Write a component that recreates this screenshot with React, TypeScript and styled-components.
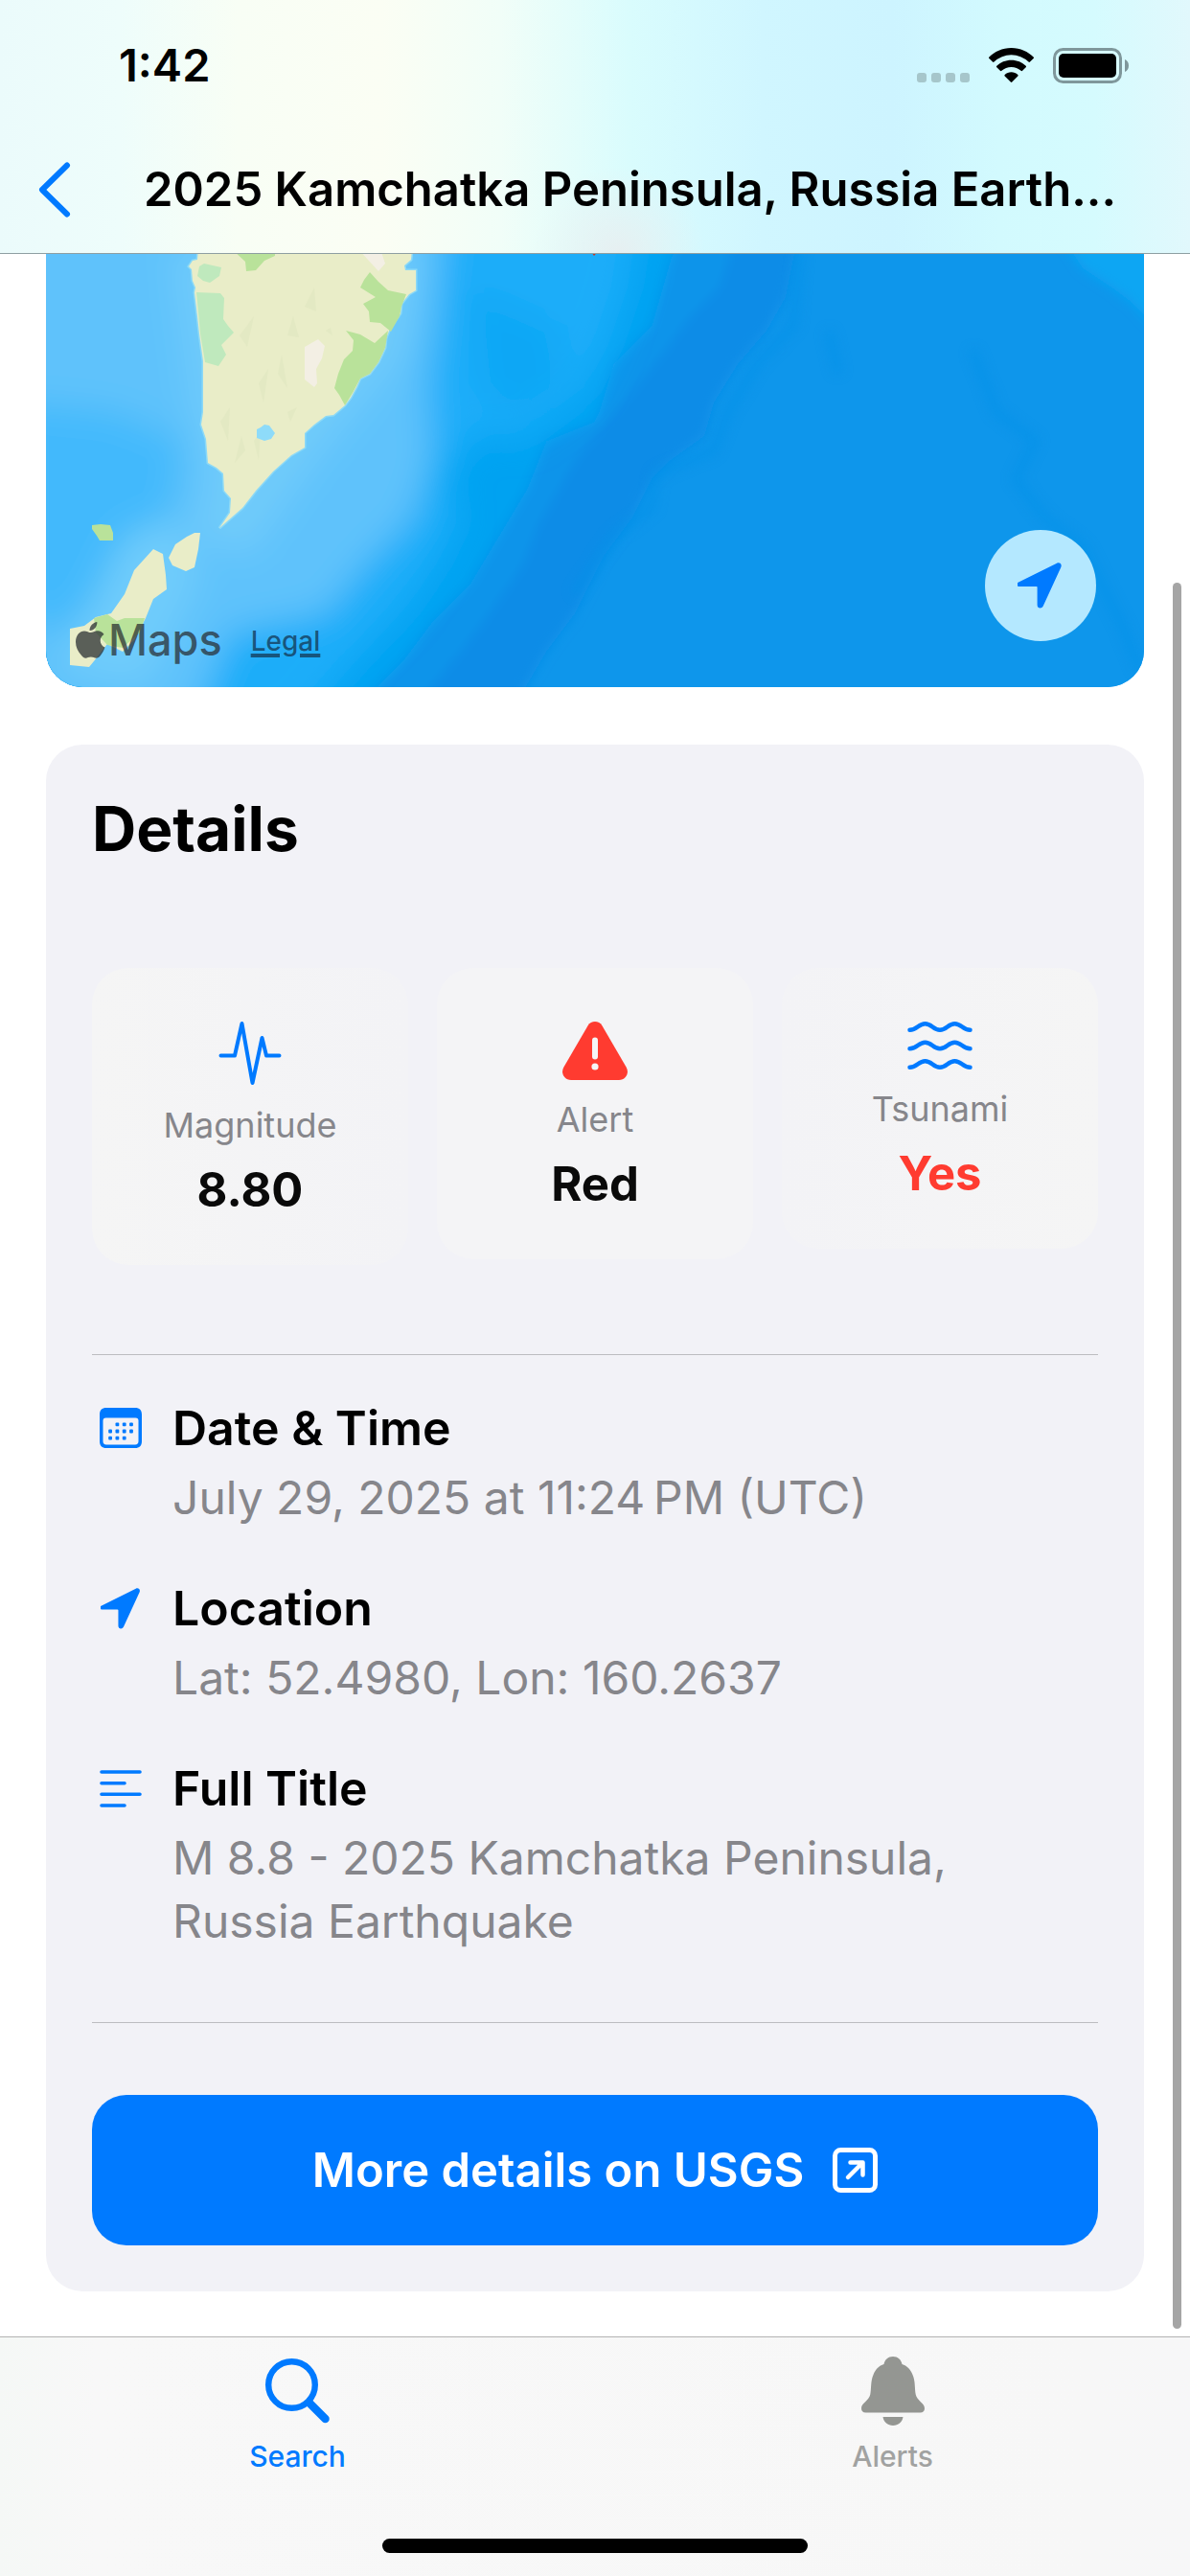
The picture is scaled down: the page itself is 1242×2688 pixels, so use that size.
import React from "react";
import styled, { createGlobalStyle } from "styled-components";

const blue = "#007aff";
const red = "#ff3b30";
const secondary = "#86868b";

const GlobalStyle = createGlobalStyle`
  * { box-sizing: border-box; }
  body {
    margin: 0;
    background: #fff;
    color: #000;
    font-family: Inter, "Liberation Sans", sans-serif;
    font-size: 49px;
    line-height: 60px;
  }
  h1, h2, h3, p, dl, dt, dd { margin: 0; font: inherit; }
  button { border: 0; padding: 0; background: none; font: inherit; color: inherit; }
  svg { display: block; flex: none; }
`;

const Screen = styled.div`
  display: flex;
  flex-direction: column;
  min-height: 100vh;
`;

const Header = styled.header`
  border-bottom: 1px solid #8e9fa2;
  background:
    radial-gradient(ellipse 90px 90px at 52% 100%, rgba(232, 238, 240, 0.9), rgba(232, 238, 240, 0) 100%),
    linear-gradient(90deg, #ebfbfb 0%, #eefdfb 10%, #f8fef5 20%, #fbfef4 32%, #f1fef8 42%, #d9fcfd 53%, #d0f6ff 64%, #cdf4ff 75%, #d2fafe 84%, #d5fbfe 92%, #e1f8fc 100%);
`;

const StatusBar = styled.div`
  display: flex;
  justify-content: space-between;
  align-items: center;
  height: 132px;
  padding: 4px 64px 0 124px;
  font-size: 47px;
  font-weight: 600;
`;

const StatusIcons = styled.div`
  display: flex;
  align-items: center;
`;

const NavBar = styled.nav`
  display: flex;
  align-items: center;
  height: 132px;
  padding: 0 76px 0 36px;
  gap: 72px;
`;

const BackButton = styled.button`
  display: flex;
  align-items: center;
  justify-content: center;
  width: 42px;
  height: 88px;
`;

const NavTitle = styled.h1`
  flex: 1;
  min-width: 0;
  font-weight: 600;
  white-space: nowrap;
  overflow: hidden;
  text-overflow: ellipsis;
`;

const Main = styled.main`
  position: relative;
  flex: 1;
  display: flex;
  flex-direction: column;
  gap: 60px;
  padding: 0 48px 47px;
`;

const ScrollThumb = styled.div`
  position: absolute;
  top: 343px;
  right: 9px;
  bottom: 8px;
  width: 9px;
  border-radius: 5px;
  background: #a5a5a5;
`;

const MapCard = styled.section`
  position: relative;
  height: 452px;
  border-radius: 0 0 38px 38px;
  overflow: hidden;
  background: #0e96eb;
`;

const MapDrawing = styled.svg`
  width: 100%;
  height: 100%;
`;

const Attribution = styled.div`
  position: absolute;
  left: 31px;
  bottom: 18px;
  display: flex;
  align-items: center;
  gap: 30px;
`;

const MapsMark = styled.span`
  display: flex;
  align-items: center;
  gap: 3px;
  font-size: 45px;
  font-weight: 500;
  color: rgba(40, 44, 48, 0.74);
`;

const LegalLink = styled.a`
  padding-top: 2px;
  font-size: 28px;
  font-weight: 500;
  color: rgba(20, 60, 90, 0.78);
  text-decoration: underline;
  text-decoration-thickness: 4px;
  text-underline-offset: 3px;
  text-decoration-skip-ink: auto;
`;

const LocateButton = styled.button`
  position: absolute;
  right: 50px;
  bottom: 48px;
  display: flex;
  align-items: center;
  justify-content: center;
  width: 116px;
  height: 116px;
  border-radius: 50%;
  background: #b4e8ff;
`;

const DetailsCard = styled.section`
  display: flex;
  flex-direction: column;
  padding: 48px;
  border-radius: 38px;
  background: #f2f2f7;
`;

const CardTitle = styled.h2`
  font-size: 64px;
  line-height: 80px;
  font-weight: 700;
`;

const Stats = styled.dl`
  display: grid;
  grid-template-columns: repeat(3, 1fr);
  align-items: start;
  gap: 30px;
  padding: 105px 0 93px;
`;

const Stat = styled.div`
  display: flex;
  flex-direction: column;
  align-items: center;
  gap: 16px;
  padding: 48px 24px;
  border-radius: 38px;
  background: #f4f4f6;

  &:first-child { background: linear-gradient(90deg, #f5f5f5, #f3f3f6); }
  &:last-child { background: linear-gradient(90deg, #f3f3f6, #f5f5f5); }
`;

const StatLabel = styled.dt`
  font-size: 36px;
  line-height: 44px;
  color: ${secondary};
`;

const StatValue = styled.dd<{ $alert?: boolean }>`
  font-weight: 700;
  color: ${(p) => (p.$alert ? red : "#0a0a0a")};
`;

const Divider = styled.hr`
  width: 100%;
  height: 1px;
  margin: 0;
  border: 0;
  background: #bcbcc0;
`;

const InfoList = styled.dl`
  display: flex;
  flex-direction: column;
  gap: 52px;
  padding: 46px 0 72px;
`;

const InfoRow = styled.div`
  display: grid;
  grid-template-columns: 60px 1fr;
  column-gap: 24px;
  row-gap: 10px;
`;

const InfoIcon = styled.span`
  display: flex;
  align-items: center;
  justify-content: center;
`;

const InfoTitle = styled.dt`
  font-size: 50px;
  font-weight: 600;
`;

const InfoValue = styled.dd`
  grid-column: 2;
  font-size: 48px;
  line-height: 66px;
  color: ${secondary};
`;

const LinkButton = styled.a`
  display: flex;
  align-items: center;
  justify-content: center;
  gap: 30px;
  height: 157px;
  margin-top: 75px;
  border-radius: 36px;
  background: ${blue};
  color: #fff;
  font-weight: 600;
  text-decoration: none;
`;

const TabBar = styled.footer`
  border-top: 1px solid #b2b2b2;
  background: linear-gradient(90deg, #f5f8f6, #f8f8f8 8%, #f7f7f7 92%, #f7f7f8);
`;

const Tabs = styled.nav`
  display: grid;
  grid-template-columns: 1fr 1fr;
`;

const Tab = styled.button<{ $active?: boolean }>`
  display: flex;
  flex-direction: column;
  align-items: center;
  gap: 12px;
  padding-top: 18px;
  font-size: 30px;
  line-height: 36px;
  font-weight: 500;
  color: ${(p) => (p.$active ? blue : "#a1a2a1")};
`;

const HomeIndicator = styled.div`
  width: 444px;
  height: 15px;
  margin: 68px auto 24px;
  border-radius: 8px;
  background: #000;
`;

const CellularDots = () => (
  <svg width="55" height="37" viewBox="0 0 55 37" fill="#a6c6cb">
    {[0, 15, 30, 45].map((x) => (
      <rect key={x} x={x} y="26" width="10" height="10" rx="3" />
    ))}
  </svg>
);

const Wifi = () => (
  <svg width="87" height="37" viewBox="0 0 87 37">
    <g transform="translate(20 0)" fill="#000">
      <path d="M23.5 0C33 0 41 4 46.6 9.5a1 1 0 0 1 0 1.5L43 14.6a1 1 0 0 1-1.5 0A26 26 0 0 0 5.5 14.6a1 1 0 0 1-1.5 0L.4 11a1 1 0 0 1 0-1.5C6 4 14 0 23.5 0Z" />
      <path d="M23.5 12.7c6 0 11.3 2.3 15.2 6a1 1 0 0 1 0 1.5l-3.6 3.6a1 1 0 0 1-1.5 0 15 15 0 0 0-20.2 0 1 1 0 0 1-1.5 0l-3.6-3.6a1 1 0 0 1 0-1.5c3.9-3.7 9.2-6 15.2-6Z" />
      <path d="M23.5 25.3c2.6 0 5 1 6.800 2.6a1 1 0 0 1 0 1.5l-6 6.2a1 1 0 0 1-1.5 0l-6.100-6.2a1 1 0 0 1 0-1.5c1.8-1.6 4.2-2.6 6.800-2.6Z" />
    </g>
  </svg>
);

const Battery = () => (
  <svg width="79" height="37" viewBox="0 0 79 37">
    <rect x="1.5" y="1.5" width="69" height="34" rx="9" fill="none" stroke="#7f979b" strokeWidth="3" />
    <rect x="6" y="6" width="60" height="25" rx="5" fill="#000" />
    <path d="M75 12c2.5 1 4 3.5 4 6.5S77.5 24 75 25Z" fill="#7f979b" />
  </svg>
);

const Chevron = () => (
  <svg width="34" height="58" viewBox="0 0 34 58" fill="none" stroke={blue} strokeWidth="6" strokeLinecap="round" strokeLinejoin="round">
    <path d="M30 3.5 4 29l26 25.5" />
  </svg>
);

const Arrow = ({ size }: { size: number }) => (
  <svg width={size} height={size} viewBox="2 0 48 48" fill={blue}>
    <path d="M2.6 20.8 43 .7c3.1-1.5 5.7 1.2 4.3 4.2L28.8 45.3c-1.6 3.4-6.2 2.7-6.2-1.1V26c0-.7-.3-1-1-1H3.5C-.3 25-1 22.6 2.6 20.8Z" />
  </svg>
);

const Pulse = () => (
  <svg width="66" height="78" viewBox="0 0 66 78" fill="none" stroke={blue} strokeWidth="4" strokeLinecap="round" strokeLinejoin="round">
    <path d="M2.5 43.5H17L24.5 10l11 62 10-47 4.5 18.5h13.500" />
  </svg>
);

const Warning = () => (
  <svg width="68" height="72" viewBox="0 0 68 72">
    <path d="M26.600 12.200c3.300-5.600 11.500-5.600 14.800 0l25.200 43.200c3.600 6.300-.4 13.600-7.600 13.600H9c-7.200 0-11.200-7.300-7.600-13.600Z" fill={red} />
    <path d="M34 27.500v17" stroke="#f5f5f6" strokeWidth="6" strokeLinecap="round" />
    <circle cx="34" cy="55" r="3.600" fill="#f5f5f6" />
  </svg>
);

const Waves = () => (
  <svg width="68" height="61" viewBox="0 0 68 61" fill="none" stroke={blue} strokeWidth="4.5" strokeLinecap="round">
    {[0, 19.5, 39].map((y) => (
      <path key={y} transform={`translate(0 ${y})`} d="M2.500 16.700c8 0 9-6.500 16-6.500s8.500 6.500 15.500 6.500 8.500-6.500 15.500-6.500 8 6.500 16 6.500" />
    ))}
  </svg>
);

const Calendar = () => (
  <svg width="44" height="42" viewBox="0 0 44 42" fill={blue}>
    <path fillRule="evenodd" d="M7 0h30c4.6 0 7 2.4 7 7v28c0 4.6-2.4 7-7 7H7c-4.6 0-7-2.4-7-7V7c0-4.6 2.4-7 7-7Zm-.5 10.5c-2 0-3 1-3 3v21.5c0 2.200 1.200 3.500 3.500 3.500h30c2.300 0 3.500-1.300 3.500-3.500V13.500c0-2-1-3-3-3Z" />
    {[[1, 0], [2, 0], [3, 0], [0, 1], [1, 1], [2, 1], [3, 1], [0, 2], [1, 2], [2, 2]].map(([c, r]) => (
      <rect key={`${c}${r}`} x={9.2 + c * 7.3} y={15.4 + r * 7.2} width="3.8" height="3.8" rx="1" />
    ))}
  </svg>
);

const TextLines = () => (
  <svg width="44" height="39" viewBox="0 0 44 39" stroke={blue} strokeWidth="3.600" strokeLinecap="round">
    <path d="M2 2h40M2 13.700h24M2 25.300h40M2 37h24" />
  </svg>
);

const OpenSquare = () => (
  <svg width="47" height="47" viewBox="0 0 47 47" fill="none" stroke="#fff" strokeWidth="5" strokeLinecap="round" strokeLinejoin="round">
    <rect x="2.500" y="2.500" width="42" height="42" rx="6" />
    <path d="M16 31 31 16M18.500 15.500H31.500V28.500" strokeWidth="4.500" />
  </svg>
);

const Magnifier = () => (
  <svg width="68" height="76" viewBox="0 0 68 76" fill="none" stroke={blue}>
    <circle cx="27.500" cy="31.500" r="24.300" strokeWidth="6.400" />
    <path d="M46 50.500 62.500 67" strokeWidth="8.500" strokeLinecap="round" />
  </svg>
);

const Bell = () => (
  <svg width="66" height="76" viewBox="0 0 66 76" fill="#949692">
    <path d="M4.500 60.500C1.600 60.500 0 58.800 0 56c0-5.500 8-7.800 9.300-14.500C10.500 35 9.500 28 12.500 21c2-5.500 6-9.500 11-11C24.500 5 28 2 33 2s8.500 3 9.500 8c5 1.500 9 5.500 11 11 3 7 2 14 3.200 20.500C58 48.200 66 50.500 66 56c0 2.800-1.600 4.500-4.500 4.500Z" />
    <path d="M22.500 65h21C42.700 70.500 38.500 74 33 74s-9.700-3.500-10.500-9Z" />
  </svg>
);

const AppleLogo = () => (
  <svg width="31" height="38" viewBox="0 0 31 38" fill="currentColor">
    <path d="M22.300 0c.3 2.300-.6 4.600-2 6.300-1.400 1.700-3.600 3-5.700 2.800-.3-2.200.8-4.500 2.100-6C18.100 1.400 20.400.2 22.300 0ZM29.500 13c-2.300 1.400-3.800 3.500-3.800 6.500 0 3.400 2 5.900 4.800 7-1 3.200-2.600 6-4.600 8.500-1.400 1.700-2.700 2.700-4.500 2.700-2 0-2.900-1.200-5.500-1.200s-3.600 1.200-5.500 1.200c-1.900 0-3.300-1.300-4.700-3.200C2.300 30.700 0 26 0 21c0-7.300 4.300-11.600 9-11.600 2.600 0 4.700 1.700 6.800 1.700 1.900 0 4-1.800 7.100-1.800 2.700 0 5 1.300 6.600 3.700Z" />
  </svg>
);

const Terrain = () => (
  <MapDrawing viewBox="48 265 1146 452" preserveAspectRatio="xMidYMid slice" role="img" aria-label="Map of the Kamchatka coast">
    <defs>
      <filter id="soft" x="-30%" y="-30%" width="160%" height="160%"><feGaussianBlur stdDeviation="18" /></filter>
      <filter id="edge" x="-30%" y="-30%" width="160%" height="160%"><feGaussianBlur stdDeviation="6" /></filter>
    </defs>
    <rect x="0" y="200" width="1250" height="560" fill="#0e96eb" />
    <g filter="url(#edge)">
      <path d="M0 200H770L757 300 735 330 700 370 665 410 640 445 610 490 590 530 555 590 520 640 480 690 455 760H0Z" fill="#0794ea" />
      <path d="M770 240H834L820 310 800 345 770 380 745 420 735 455 700 480 680 500 660 540 630 580 600 640 570 680 535 740H430L480 680 510 640 545 590 560 550 600 480 650 420 690 370 720 330 750 300Z" fill="#0d8ce7" />
      <path d="M0 200H730L700 270 680 340 640 380 625 430 620 440 570 460 550 510 520 560 490 610 450 650 420 690 370 740H0Z" fill="#02a2f1" />
      <path d="M1110 250 1130 280 1160 300 1180 315 1210 345V240Z" fill="#08a6f3" />
    </g>
    <g filter="url(#soft)">
      <path d="M0 200H670L655 300 635 360 610 410 570 440 540 460 500 450 465 500 480 540 455 590 420 640 380 680 310 760H0Z" fill="#1cadf9" />
      <path d="M0 200H465L455 330 445 400 450 480 430 540 380 590 340 640 240 660 200 760H0Z" fill="#5fc2fb" />
      <path d="M490 300 580 340 590 400 530 440 500 400Z" fill="#0ba7f5" />
      <path d="M20 420 120 430 190 460 180 530 130 600 60 660 20 640Z" fill="#42b9fc" />
      <path d="M180 260 200 420 215 500 200 560 260 580 330 480 420 370 440 260Z" fill="#70cbfa" />
      <path d="M60 700 130 560 180 540 210 600 150 717Z" fill="#6fccfb" />
    </g>
    <g fill="none" stroke="#0591e8" strokeWidth="9" opacity="0.55" filter="url(#edge)">
      <path d="M835 265 828 340 790 380 760 430 745 470 685 495 680 530 640 560 600 620" />
      <path d="M1015 365 1040 430 1080 460 1060 500 1090 540 1130 570 1170 650 1190 700" />
      <path d="M865 345 875 390" />
    </g>
    <path d="M207 260 206 271 201 272 197 278 200 281 201 293 204 300 203 305 206 330 208 348 212 377 212 430 210 443 215 458 217 483 226 488 233 494 234 512 241 520 240 535 229 551 253 530 267 512 285 492 304 475 318 467 318 452 328 443 340 434 348 433 360 423 366 415 372 404 376 395 386 390 395 378 402 363 403 353 407 343 418 327 419 317 427 307 434 303V282H423L422 277 429 271 430 260Z" fill="#e9edc8" stroke="#8cd9f6" strokeWidth="3" paintOrder="stroke" />
    <g fill="#bfe9bd">
      <path d="M208 278 213 275 222 277 231 279 229 288 219 295 212 293 206 288Z" />
      <path d="M205 305 230 306 234 311 233 333 238 340 244 347 231 360 236 370 228 382 214 378 209 348Z" />
    </g>
    <g fill="#b9e29a">
      <path d="M242 260H287V267L276 272 267 282 257 283 256 273Z" />
      <path d="M386 284 395 294 405 303 424 307 419 320 417 330 408 346 397 337 386 336 385 325 379 317 392 310 376 300 380 292Z" />
      <path d="M361 345 376 349 391 358 405 345 402 363 395 378 386 390 376 395 368 410 360 423 354 412 349 405 353 390 359 375 368 366 369 355Z" />
      <path d="M96 548 105 547 115 548 118 556V564H104L101 559 96 552Z" />
    </g>
    <g fill="#f3efe4">
      <path d="M374 260H397L402 275 395 283Z" />
      <path d="M318 362 332 354 339 361 336 374 330 385 331 400 328 404 318 396Z" />
    </g>
    <g fill="#e0e6c0" opacity="0.6">
      <path d="M250 350 265 330 258 362ZM270 400 280 385 275 420ZM290 390 294 370 300 405ZM230 440 240 425 238 460ZM245 483 252 455 256 470ZM300 430 310 425 303 440ZM340 345 345 342 347 350ZM265 460 272 450 270 480ZM300 350 306 330 312 352ZM318 320 328 300 330 325Z" />
    </g>
    <path d="M272 446 276 443 281 444 287 452 283 458 276 460 268 457 268 448Z" fill="#8edbf9" />
    <path d="M209 556 207 573 203 592 194 596 180 590 176 582 183 568 195 560 203 556Z" fill="#e9edc8" />
    <path d="M160 573 170 578 173 600 174 615 160 625 152 645 140 668 128 680 112 672 98 690 93 696 73 694V656L88 653 100 644 116 640 130 620 140 595Z" fill="#e9edc8" />
    <path d="M98 645 112 641 122 648 130 645H151L146 660 128 676 112 673 100 660Z" fill="#b9e29a" />
    <path d="M615 260h11l-6 7Z" fill="#c8331f" />
  </MapDrawing>
);

export default function App() {
  return (
    <>
      <GlobalStyle />
      <Screen>
        <Header>
          <StatusBar>
            <span>1:42</span>
            <StatusIcons>
              <CellularDots />
              <Wifi />
              <Battery />
            </StatusIcons>
          </StatusBar>
          <NavBar>
            <BackButton aria-label="Back"><Chevron /></BackButton>
            <NavTitle>2025 Kamchatka Peninsula, Russia Earth...</NavTitle>
          </NavBar>
        </Header>

        <Main>
          <MapCard>
            <Terrain />
            <Attribution>
              <MapsMark><AppleLogo />Maps</MapsMark>
              <LegalLink href="#legal">Legal</LegalLink>
            </Attribution>
            <LocateButton aria-label="Center on earthquake"><Arrow size={48} /></LocateButton>
          </MapCard>

          <DetailsCard>
            <CardTitle>Details</CardTitle>
            <Stats>
              <Stat>
                <Pulse />
                <StatLabel>Magnitude</StatLabel>
                <StatValue>8.80</StatValue>
              </Stat>
              <Stat>
                <Warning />
                <StatLabel>Alert</StatLabel>
                <StatValue>Red</StatValue>
              </Stat>
              <Stat>
                <Waves />
                <StatLabel>Tsunami</StatLabel>
                <StatValue $alert>Yes</StatValue>
              </Stat>
            </Stats>
            <Divider />
            <InfoList>
              <InfoRow>
                <InfoIcon><Calendar /></InfoIcon>
                <InfoTitle>Date &amp; Time</InfoTitle>
                <InfoValue>July 29, 2025 at 11:24{"\u202f"}PM (UTC)</InfoValue>
              </InfoRow>
              <InfoRow>
                <InfoIcon><Arrow size={43} /></InfoIcon>
                <InfoTitle>Location</InfoTitle>
                <InfoValue>Lat: 52.4980, Lon: 160.2637</InfoValue>
              </InfoRow>
              <InfoRow>
                <InfoIcon><TextLines /></InfoIcon>
                <InfoTitle>Full Title</InfoTitle>
                <InfoValue>M 8.8 - 2025 Kamchatka Peninsula, Russia Earthquake</InfoValue>
              </InfoRow>
            </InfoList>
            <Divider />
            <LinkButton href="#usgs">More details on USGS<OpenSquare /></LinkButton>
          </DetailsCard>
          <ScrollThumb />
        </Main>

        <TabBar>
          <Tabs>
            <Tab $active><Magnifier />Search</Tab>
            <Tab><Bell />Alerts</Tab>
          </Tabs>
          <HomeIndicator />
        </TabBar>
      </Screen>
    </>
  );
}
